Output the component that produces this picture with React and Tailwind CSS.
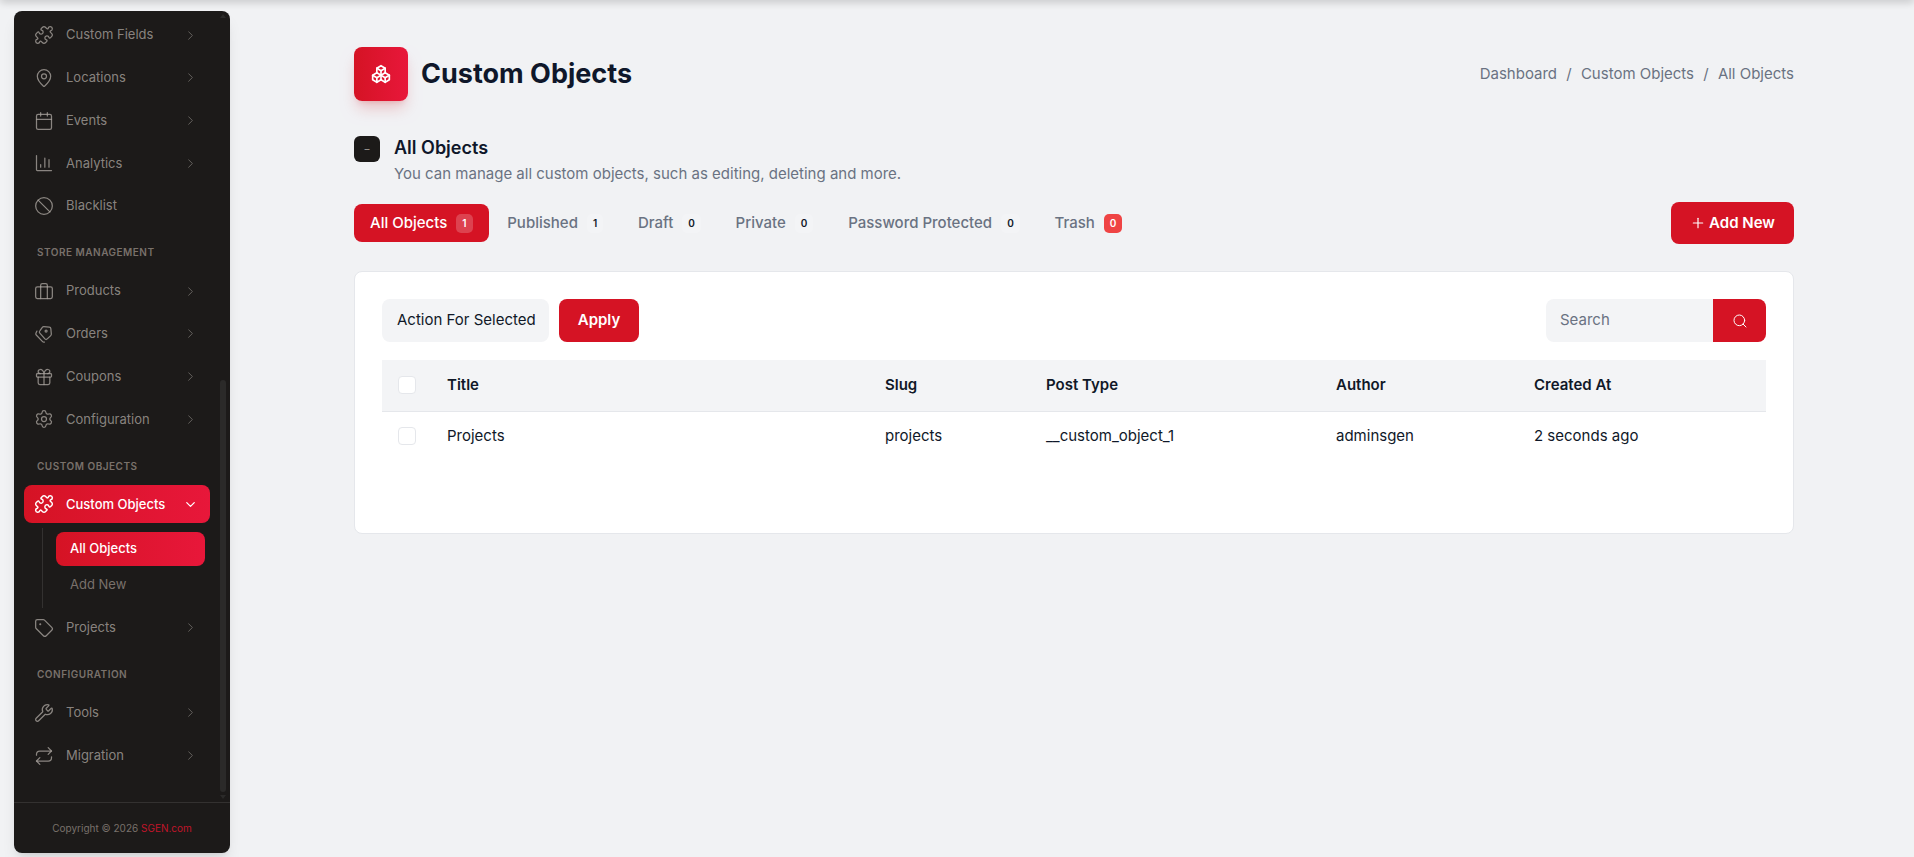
import {
  Puzzle,
  MapPin,
  Calendar,
  Ban,
  Gift,
  Settings,
  Tag,
  Wrench,
  Repeat,
  ChevronRight,
  ChevronDown,
  Plus,
  Search,
} from "lucide-react";
import { TbPackages } from "react-icons/tb";

function AnalyticsIcon({ size, strokeWidth, className }) {
  return (
    <svg width={size} height={size} viewBox="0 0 24 24" fill="none" stroke="currentColor" strokeWidth={strokeWidth} strokeLinecap="round" strokeLinejoin="round" className={className}>
      <path d="M3 3v17a1 1 0 0 0 1 1h17" />
      <path d="M8 17v-3" />
      <path d="M13 17V6" />
      <path d="M18 17V8" />
    </svg>
  );
}

function ProductsIcon({ size, strokeWidth, className }) {
  return (
    <svg width={size} height={size} viewBox="0 0 24 24" fill="none" stroke="currentColor" strokeWidth={strokeWidth} strokeLinecap="round" strokeLinejoin="round" className={className}>
      <rect x="2" y="7" width="20" height="14" rx="2" />
      <path d="M8 7v14" />
      <path d="M16 7v14" />
      <path d="M8 7V5a2 2 0 0 1 2-2h4a2 2 0 0 1 2 2v2" />
    </svg>
  );
}

function OrdersIcon({ size, strokeWidth, className }) {
  return (
    <svg width={size} height={size} viewBox="0 0 24 24" fill="none" stroke="currentColor" strokeWidth={strokeWidth} strokeLinecap="round" strokeLinejoin="round" className={className}>
      <path d="M7.2 8 10 4a2 2 0 0 1 1.8-.8l6.6.6a2 2 0 0 1 1.8 1.8l.6 6.6a2 2 0 0 1-.7 1.7l-4.2 4a2 2 0 0 1-2.8 0L7 11a2.2 2.2 0 0 1 .2-3z" />
      <circle cx="14.5" cy="8.5" r="1.2" />
      <path d="M3.5 8.5 2.3 11a2 2 0 0 0 .4 2.2l7.6 8a2 2 0 0 0 2.2.5" />
    </svg>
  );
}

function NavItem({ icon: Icon, label }) {
  return (
    <a className="flex items-center h-[38px] pl-[10px] text-[13px] text-stone-400/80">
      <Icon size={20} strokeWidth={1.5} className="shrink-0" />
      <span className="ml-3 flex-1">{label}</span>
      <ChevronRight size={15} strokeWidth={1.5} className="mr-3 opacity-70" />
    </a>
  );
}

function NavLabel({ children }) {
  return (
    <div className="mt-[15.5px] mb-[8px] h-[14px] pl-[13px] text-[10px] leading-[14px] font-semibold uppercase tracking-[0.5px] text-stone-500">
      {children}
    </div>
  );
}

function Sidebar() {
  return (
    <aside className="relative ml-[14px] mt-[11px] mb-1 w-[216px] shrink-0 flex flex-col rounded-lg bg-[#1c1a19] shadow-lg overflow-hidden">
      <nav className="flex-1 flex flex-col gap-[4.75px] pt-[5px] pl-[10px] pr-5">
        <NavItem icon={Puzzle} label="Custom Fields" />
        <NavItem icon={MapPin} label="Locations" />
        <NavItem icon={Calendar} label="Events" />
        <NavItem icon={AnalyticsIcon} label="Analytics" />
        <a className="flex items-center h-[38px] pl-[10px] text-[13px] text-stone-400/80">
          <Ban size={20} strokeWidth={1.5} />
          <span className="ml-3">Blacklist</span>
        </a>
        <NavLabel>Store Management</NavLabel>
        <NavItem icon={ProductsIcon} label="Products" />
        <NavItem icon={OrdersIcon} label="Orders" />
        <NavItem icon={Gift} label="Coupons" />
        <NavItem icon={Settings} label="Configuration" />
        <NavLabel>Custom Objects</NavLabel>
        <a className="flex items-center h-[38px] pl-[10px] rounded-lg bg-linear-to-r from-[#d51324] to-[#e8173a] text-[13px] font-medium text-white">
          <Puzzle size={20} strokeWidth={1.75} />
          <span className="ml-3 flex-1">Custom Objects</span>
          <ChevronDown size={15} strokeWidth={2} className="mr-3" />
        </a>
        <div className="ml-[18px] mr-[5px] mb-[-4px] border-l border-white/10 pl-[13px] pt-1 pb-[6px] flex flex-col gap-[2px] text-[13px]">
          <a className="flex items-center h-[34px] pl-[14px] rounded-lg bg-linear-to-r from-[#d51324] to-[#e8173a] font-medium text-white">
            All Objects
          </a>
          <a className="flex items-center h-[34px] pl-[14px] text-stone-500">Add New</a>
        </div>
        <NavItem icon={Tag} label="Projects" />
        <NavLabel>Configuration</NavLabel>
        <NavItem icon={Wrench} label="Tools" />
        <NavItem icon={Repeat} label="Migration" />
      </nav>
      <div className="h-[51px] shrink-0 flex items-center justify-center border-t border-white/10 text-[10px] text-stone-500">
        Copyright © 2026&nbsp;<span className="text-[#c0152a]">SGEN.com</span>
      </div>
      {/* scrollbar */}
      <div className="absolute right-[4px] top-0 bottom-[51px] w-[6px]">
        <svg width="6" height="4" viewBox="0 0 6 4" className="absolute left-0 top-[3px] fill-[#2b2a29]">
          <path d="M3 0 6 4H0z" />
        </svg>
        <div className="absolute left-0 right-0 top-[369px] bottom-[10px] rounded-full bg-[#2b2a29]" />
        <svg width="6" height="4" viewBox="0 0 6 4" className="absolute left-0 bottom-[3px] fill-[#2b2a29]">
          <path d="M0 0h6L3 4z" />
        </svg>
      </div>
    </aside>
  );
}

function Tab({ label, count, active, danger }) {
  return (
    <a
      className={`flex items-center h-[38px] px-4 rounded-lg text-[15px] font-medium ${
        active ? "bg-[#d51324] text-white" : "text-gray-500"
      }`}
    >
      {label}
      <span
        className={`ml-[9px] flex items-center justify-center px-[6px] h-[19px] rounded-[5px] text-[10px] font-semibold ${
          active ? "bg-white/20 text-white" : danger ? "bg-[#ef4444] text-white" : "bg-gray-100 text-gray-900"
        }`}
      >
        {count}
      </span>
    </a>
  );
}

export default function App() {
  return (
    <div className="relative flex h-screen overflow-hidden bg-[#f1f2f4] font-['Inter',sans-serif]">
      <div className="absolute -top-2 left-0 right-0 h-2 bg-white shadow-[0_2px_8px_rgba(0,0,0,0.2)]" />
      <Sidebar />
      <main className="flex-1 pl-[124px] pr-[120px] pt-[47px]">
        <div className="flex items-center justify-between">
          <div className="flex items-center gap-[13px]">
            <div className="flex items-center justify-center w-[54px] h-[54px] rounded-lg bg-linear-to-r from-[#d51324] to-[#e8173a] text-white shadow-lg shadow-red-700/20">
              <TbPackages size={20} strokeWidth={2} />
            </div>
            <h1 className="text-[27px] font-bold text-[#0f172a]">Custom Objects</h1>
          </div>
          <div className="text-[15px] text-gray-500">
            Dashboard <span className="mx-[5px]">/</span> Custom Objects <span className="mx-[5px]">/</span> All Objects
          </div>
        </div>

        <div className="mt-[35px] flex gap-[14px]">
          <div className="flex items-center justify-center w-[26px] h-[26px] rounded-md bg-[#1c1a19] text-stone-400 text-[10px]">
            –
          </div>
          <div>
            <h2 className="text-[18px] leading-[24px] font-semibold text-[#0f172a]">All Objects</h2>
            <p className="mt-[1.5px] text-[15px] leading-[24px] text-gray-500">
              You can manage all custom objects, such as editing, deleting and more.
            </p>
          </div>
        </div>

        <div className="mt-[16.5px] flex items-center justify-between">
          <div className="flex items-center gap-[2.75px]">
            <Tab label="All Objects" count="1" active />
            <Tab label="Published" count="1" />
            <Tab label="Draft" count="0" />
            <Tab label="Private" count="0" />
            <Tab label="Password Protected" count="0" />
            <Tab label="Trash" count="0" danger />
          </div>
          <button className="flex items-center justify-center gap-[3px] w-[123px] h-[42px] rounded-lg bg-[#d51324] text-[15px] font-semibold text-white">
            <Plus size={16} strokeWidth={1.75} />
            Add New
          </button>
        </div>

        <div className="mt-[27px] h-[263px] rounded-lg border border-gray-200 bg-white px-[27px] pt-[27px]">
          <div className="flex items-center justify-between">
            <div className="flex gap-[10px]">
              <div className="flex items-center w-[167px] h-[43px] rounded-lg bg-gray-100 pl-[15px] text-[15px] text-gray-900">
                Action For Selected
              </div>
              <button className="w-[80px] h-[43px] rounded-lg bg-[#d51324] text-[15px] font-semibold text-white">
                Apply
              </button>
            </div>
            <div className="flex h-[43px] w-[220px] rounded-lg overflow-hidden">
              <input
                placeholder="Search"
                className="flex-1 min-w-0 bg-gray-100 pl-[14px] text-[15px] text-gray-900 placeholder:text-gray-500 outline-none"
              />
              <button className="flex items-center justify-center w-[53px] bg-[#d51324] text-white">
                <Search size={16} strokeWidth={1.5} />
              </button>
            </div>
          </div>

          <table className="mt-[18px] w-full table-fixed text-left text-[15px] text-gray-900">
            <colgroup>
              <col className="w-[49px]" />
              <col className="w-[438px]" />
              <col className="w-[161px]" />
              <col className="w-[290px]" />
              <col className="w-[198px]" />
              <col />
            </colgroup>
            <thead>
              <tr className="h-[51px] bg-gray-100 border-b border-gray-200">
                <th className="pl-4 font-medium">
                  <span className="block w-[18px] h-[18px] rounded bg-white border border-gray-200" />
                </th>
                <th className="pl-4 font-semibold">Title</th>
                <th className="pl-4 font-semibold">Slug</th>
                <th className="pl-4 font-semibold">Post Type</th>
                <th className="pl-4 font-semibold">Author</th>
                <th className="pl-4 font-semibold">Created At</th>
              </tr>
            </thead>
            <tbody>
              <tr className="h-[49px]">
                <td className="pl-4">
                  <span className="block w-[18px] h-[18px] rounded bg-white border border-gray-200" />
                </td>
                <td className="pl-4">Projects</td>
                <td className="pl-4">projects</td>
                <td className="pl-4">__custom_object_1</td>
                <td className="pl-4">adminsgen</td>
                <td className="pl-4">2 seconds ago</td>
              </tr>
            </tbody>
          </table>
        </div>
      </main>
    </div>
  );
}
